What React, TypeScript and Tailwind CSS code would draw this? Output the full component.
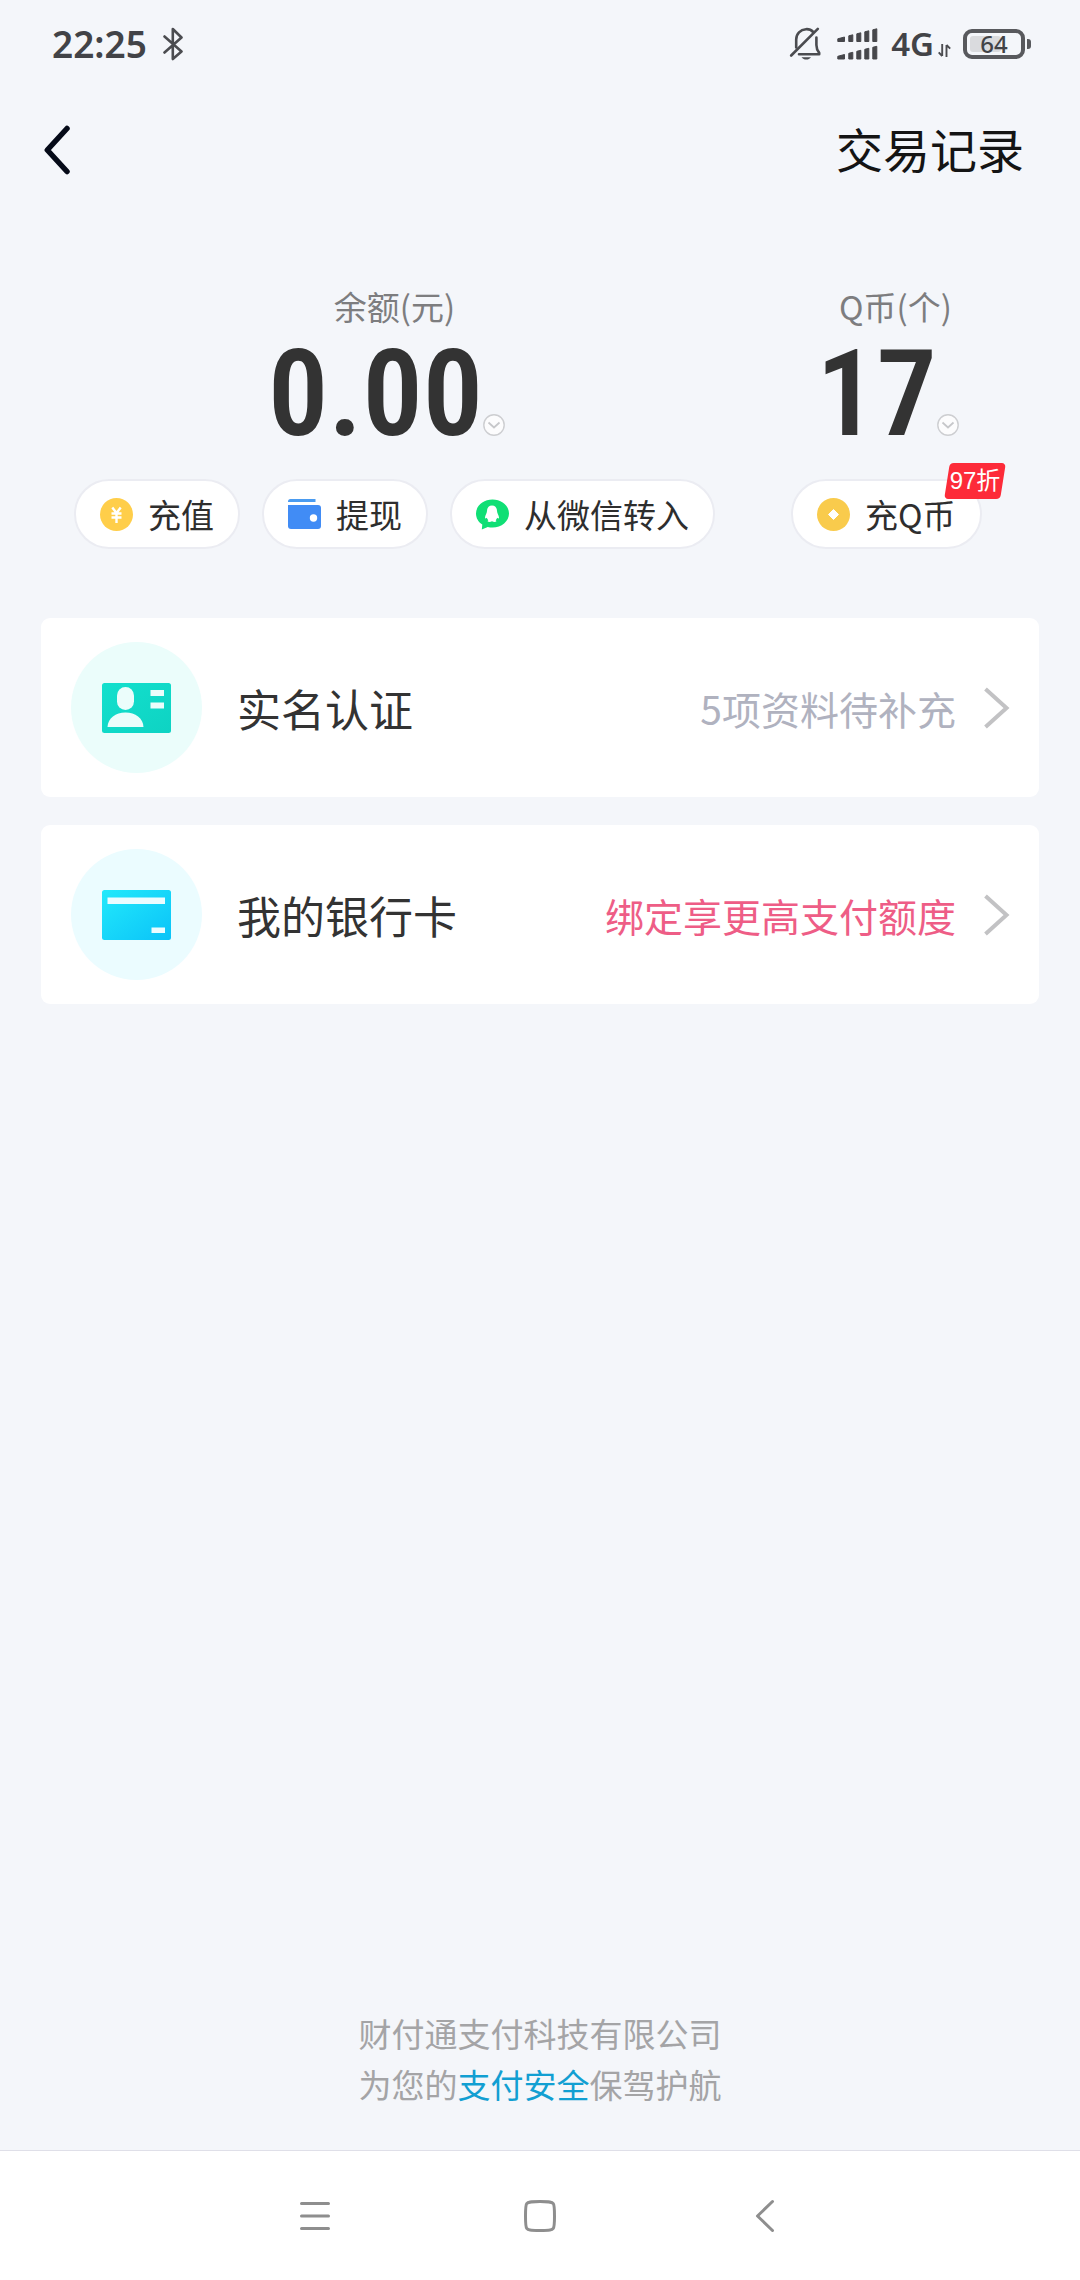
import React from 'react';

const BellOffIcon = () => (
  <svg width="34" height="34" viewBox="0 0 34 34" fill="none" stroke="#4b4c50" strokeWidth="2.6" strokeLinecap="round" strokeLinejoin="round">
    <path d="M7.2 20.5V12.5C7.2 6.8 11.4 2.6 17 2.2c2.8-.2 5.300 .8 7.200 2.800" />
    <path d="M27.400 10.500v7.500c0 3 1 5.600 2.800 7.900v1.300H10" />
    <path d="M2.200 28.500 28.800 1.800" />
    <path d="M12.500 30.200h9.500c-1.200 1.500-2.800 2.300-4.700 2.300s-3.600-.8-4.800-2.300z" fill="#4b4c50" stroke="none" />
  </svg>
);

const SignalIcon = () => (
  <svg width="41" height="32" viewBox="0 0 41 32" fill="#46474b" stroke="#46474b" strokeWidth="1" strokeLinejoin="round">
    <path d="M.8 10.800 7.500 9v4.500H.800zM11.800 7.800l4-1v6.700h-4zM19.800 5.800l4-1v8.700h-4zM27.800 3.800l4-1v10.700h-4zM35.800 1.800l4-1v12.700h-4z" />
    <path d="M.8 28.300l6.700-1.800v4.500H.800zM11.800 25.300l4-1v6.700h-4zM19.800 23.300l4-1v8.700h-4zM27.800 21.300l4-1v10.700h-4zM35.800 19.300l4-1v12.700h-4z" />
  </svg>
);

const DataArrowsIcon = () => (
  <svg width="13" height="13" viewBox="0 0 13 13" fill="none" stroke="#4b4c50" strokeWidth="1.900">
    <path d="M4.200 0v12M4.200 12 .7 8.300M8.500 13V1M8.500 1 12.200 4.700" />
  </svg>
);

const BluetoothIcon = () => (
  <svg width="20" height="34" viewBox="0 0 20 34" fill="none" stroke="#4b4c50" strokeWidth="2.600" strokeLinecap="round" strokeLinejoin="round">
    <path d="M1.500 9.500 18.500 24.500 9.800 32V2L18.500 10.500 1.500 25.500" />
  </svg>
);

const BackIcon = () => (
  <svg width="26" height="50" viewBox="0 0 26 50" fill="none" stroke="#050a18" strokeWidth="5.500" strokeLinecap="round" strokeLinejoin="round">
    <path d="M23 3.500 3.300 25 23 46.500" />
  </svg>
);

const DropIcon = () => (
  <svg width="22" height="22" viewBox="0 0 22 22" fill="none">
    <circle cx="11" cy="11" r="10.200" fill="#fcfcfd" stroke="#cdced1" strokeWidth="1.400" />
    <path d="m5.500 8.500 5.500 5 5.500-5" stroke="#c6c7ca" strokeWidth="1.700" />
  </svg>
);

const YuanIcon = () => (
  <svg width="33" height="33" viewBox="0 0 33 33" fill="none">
    <circle cx="16.500" cy="16.500" r="16.500" fill="#ffce4a" />
    <path d="m12.300 9.500 4.200 5.500 4.200-5.500M11.500 15.500h10M11.500 19.500h10M16.500 15v10" stroke="#fff" strokeWidth="2.400" />
  </svg>
);

const WalletIcon = () => (
  <svg width="33" height="33" viewBox="0 0 33 33">
    <path d="M2.500 1h25v3H0V3.500A2.500 2.500 0 0 1 2.500 1z" fill="#4a9bf0" />
    <path d="M0 7h30a3 3 0 0 1 3 3v18a3 3 0 0 1-3 3H3a3 3 0 0 1-3-3z" fill="#418cf5" />
    <circle cx="25.500" cy="20" r="3.700" fill="#fff" />
  </svg>
);

const WechatIcon = () => (
  <svg width="33" height="33" viewBox="0 0 33 33">
    <path d="M16.500 1.500C7.400 1.500 0 7.700 0 15.500c0 4.700 2.400 8.600 6.300 11.100L5.800 31.500l6-2.600c1.500.4 3.100.6 4.700.6 9.100 0 16.500-6.200 16.500-14S25.600 1.500 16.500 1.500z" fill="#10df75" />
    <path d="M16 7.500c-3.300 0-5 2.400-5 5.500 0 2-1.800 4.300-2 6.500 0 1.200.8 1.200 1.800.2.300 1 .8 1.800 1.500 2.500-.8.500-1 1.300 0 1.600 1.200.3 2.700 0 3.700-.6 1 .6 2.500.9 3.700.6 1-.3.800-1.100 0-1.600.7-.7 1.200-1.500 1.500-2.500 1 1 1.800 1 1.800-.2-.2-2.200-2-4.500-2-6.500 0-3.100-1.700-5.500-5-5.500z" fill="#fff" />
  </svg>
);

const CoinIcon = () => (
  <svg width="33" height="33" viewBox="0 0 33 33">
    <circle cx="16.500" cy="16.500" r="16.500" fill="#f9cb4c" />
    <path d="m16.500 11.500 5 5-5 5-5-5z" fill="#fff" stroke="#fff" strokeWidth="1" strokeLinejoin="round" />
  </svg>
);

const IdCardIcon = () => (
  <svg width="131" height="131" viewBox="0 0 131 131">
    <defs>
      <linearGradient id="idCard" x1="0" y1="0" x2="1" y2="1">
        <stop offset="0" stopColor="#13e0cd" />
        <stop offset="1" stopColor="#0ed3c3" />
      </linearGradient>
    </defs>
    <circle cx="65.500" cy="65.500" r="65.500" fill="#ebfdfb" />
    <rect x="31" y="41" width="69" height="50" rx="2.500" fill="url(#idCard)" />
    <rect x="46" y="45" width="17" height="23" rx="8.500" fill="#ebfdfb" />
    <path d="M36.500 85c.5-9 8-14.500 18-14.500s17.500 5.500 18 14.500z" fill="#ebfdfb" />
    <path d="M79.500 48H93v6H79.500zM79.500 60.500H93v6H79.500z" fill="#ebfdfb" />
  </svg>
);

const BankCardIcon = () => (
  <svg width="131" height="131" viewBox="0 0 131 131">
    <defs>
      <linearGradient id="bankCard" x1="0" y1="0" x2="1" y2="1">
        <stop offset="0" stopColor="#22e9fb" />
        <stop offset="1" stopColor="#0bc3f8" />
      </linearGradient>
    </defs>
    <circle cx="65.500" cy="65.500" r="65.500" fill="#ebfcff" />
    <rect x="31" y="41" width="69" height="50" rx="2.500" fill="url(#bankCard)" />
    <path d="M36.500 48.500H94V55H36.500zM80.500 78.500H94V84H80.500z" fill="#ebfcff" />
  </svg>
);

const ChevronIcon = () => (
  <svg width="26" height="42" viewBox="0 0 26 42" fill="none" stroke="#c2c2c4" strokeWidth="4">
    <path d="M1.500 2 22.500 21 1.500 40" />
  </svg>
);

interface PillProps {
  icon: React.ReactNode;
  label: string;
}

const Pill: React.FC<PillProps> = ({ icon, label }) => (
  <button className="flex h-[70px] items-center gap-[15px] whitespace-nowrap rounded-full border-2 border-[#ebecf2] bg-white px-6 text-[33px] leading-10 text-[#2e2e2e]">
    {icon}
    {label}
  </button>
);

interface AmountProps {
  label: string;
  value: string;
}

const Amount: React.FC<AmountProps> = ({ label, value }) => (
  <div className="flex flex-col items-center">
    <span className="text-[33px] leading-10 text-[#7d7d7f]">{label}</span>
    <button className="mt-[18px] flex items-end pr-4" aria-label={label}>
      <span className="font-['Liberation_Sans_Narrow','Roboto_Condensed','Roboto',sans-serif] text-[120px] font-semibold leading-[100px] text-[#333333]">
        {value}
      </span>
      <span className="pb-2">
        <DropIcon />
      </span>
    </button>
  </div>
);

interface EntryProps {
  icon: React.ReactNode;
  title: string;
  note: string;
  highlight?: boolean;
}

const Entry: React.FC<EntryProps> = ({ icon, title, note, highlight }) => (
  <a href="#" className="flex h-[179px] items-center rounded-[9px] bg-white pl-[30px] pr-[29px]">
    {icon}
    <span className="ml-[35px] text-[44px] leading-[56px] text-[#333333]">{title}</span>
    <span className={`ml-auto mr-[28px] text-[39px] leading-[56px] ${highlight ? 'text-[#ee5d86]' : 'text-[#b0b2bf]'}`}>
      {note}
    </span>
    <ChevronIcon />
  </a>
);

export default function App() {
  return (
    <div className="flex min-h-screen flex-col bg-[#f4f6fa] font-['Noto_Sans_CJK_SC',sans-serif]">
      {/* Status bar */}
      <div className="flex h-[88px] items-center pl-[52px] pr-[49px] font-['Noto_Sans',sans-serif] text-[#424347]">
        <span className="mr-4 text-[37px] font-semibold leading-10">22:25</span>
        <BluetoothIcon />
        <div className="ml-auto flex items-center">
          <BellOffIcon />
          <span className="ml-[14px]">
            <SignalIcon />
          </span>
          <span className="ml-[13px] text-[33px] font-semibold leading-10">4G</span>
          <span className="ml-1 mt-3">
            <DataArrowsIcon />
          </span>
          <div className="ml-3 flex items-center gap-[2px]">
            <div className="relative flex h-[30px] w-[62px] items-center justify-center rounded-[9px] border-4 border-[#58595d] text-[24px] font-medium leading-6">
              <div className="absolute bottom-[3px] left-[3px] top-[3px] w-[31px] rounded-[3px] bg-[#dadbde]" />
              <span className="relative">64</span>
            </div>
            <div className="h-[10px] w-1 rounded-r-[3px] bg-[#58595d]" />
          </div>
        </div>
      </div>

      {/* Title bar */}
      <header className="flex h-[124px] items-center justify-between pl-[44px] pr-[56px]">
        <button aria-label="返回">
          <BackIcon />
        </button>
        <a href="#" className="pb-1 text-[47px] leading-[56px] text-[#141414]">交易记录</a>
      </header>

      {/* Balances */}
      <section className="flex justify-between pl-[74px] pr-[80px] pt-[74px]">
        <div>
          <Amount label="余额(元)" value="0.00" />
          <div className="mt-[35px] flex gap-[22px]">
            <Pill icon={<YuanIcon />} label="充值" />
            <Pill icon={<WalletIcon />} label="提现" />
            <Pill icon={<WechatIcon />} label="从微信转入" />
          </div>
        </div>
        <div className="w-[209px]">
          <Amount label="Q币(个)" value="17" />
          <div className="relative mt-[35px] flex">
            <Pill icon={<CoinIcon />} label="充Q币" />
            <span className="absolute -right-[6px] -top-4 flex h-9 w-[62px] items-center justify-center font-['Liberation_Sans','Noto_Sans_CJK_SC',sans-serif] text-[24px] leading-9 text-white">
              <span className="absolute inset-x-[3px] inset-y-0 -skew-x-[9deg] rounded-[4px] bg-[#fd2b39]" />
              <span className="relative">97折</span>
            </span>
          </div>
        </div>
      </section>

      {/* Entries */}
      <nav className="mt-[69px] flex flex-col gap-7 px-[41px]">
        <Entry icon={<IdCardIcon />} title="实名认证" note="5项资料待补充" />
        <Entry icon={<BankCardIcon />} title="我的银行卡" note="绑定享更高支付额度" highlight />
      </nav>

      <footer className="mt-auto pb-10 text-center text-[33px] leading-[51px] text-[#a4a4a6]">
        <p>财付通支付科技有限公司</p>
        <p>
          为您的<a href="#" className="text-[#129fd2]">支付安全</a>保驾护航
        </p>
      </footer>

      {/* System navigation */}
      <div className="flex h-[130px] items-center justify-center border-t border-[#dfdfe8] bg-white">
        <button className="flex w-[225px] justify-center" aria-label="菜单">
          <svg width="34" height="34" viewBox="0 0 34 34" stroke="#8e8e8e" strokeWidth="3" strokeLinecap="round">
            <path d="M3.500 4.500h27M3.500 17h27M3.500 29.500h27" />
          </svg>
        </button>
        <button className="flex w-[225px] justify-center" aria-label="主页">
          <svg width="34" height="34" viewBox="0 0 34 34" fill="none" stroke="#8e8e8e" strokeWidth="3">
            <path d="M17 2.500c10 0 12 .5 13.300 2.200C31.500 6.300 31.500 10 31.500 17s0 10.700-1.200 12.300C29 31 27 31.500 17 31.500S5 31 3.700 29.300C2.500 27.700 2.500 24 2.500 17s0-10.700 1.200-12.300C5 3 7 2.500 17 2.500z" />
          </svg>
        </button>
        <button className="flex w-[225px] justify-center" aria-label="后退">
          <svg width="20" height="34" viewBox="0 0 20 34" fill="none" stroke="#8e8e8e" strokeWidth="3" strokeLinecap="round" strokeLinejoin="round">
            <path d="M17.500 2.500 2.500 17l15 14.500" />
          </svg>
        </button>
      </div>
    </div>
  );
}
